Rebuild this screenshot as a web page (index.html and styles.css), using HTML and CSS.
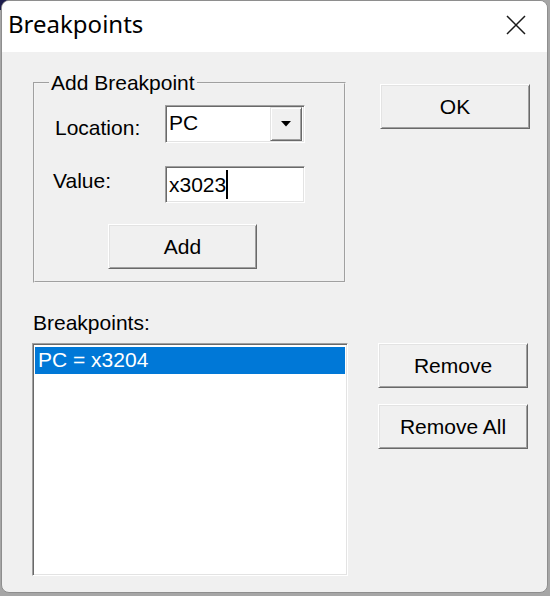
FILE: index.html
```html
<!DOCTYPE html>
<html>
<head>
<meta charset="utf-8">
<link rel="stylesheet" href="styles.css">
</head>
<body>
<div class="window">
  <div class="titlebar">
    <span class="title">Breakpoints</span>
    <svg class="close" width="20" height="20" viewBox="0 0 20 20"><path d="M1 1 L19 19 M19 1 L1 19" stroke="#1a1a1a" stroke-width="1.5" fill="none"/></svg>
  </div>
  <div class="client">
    <div class="col-left">
      <fieldset class="group">
        <legend>Add Breakpoint</legend>
        <div class="field-row row-location">
          <span class="label label-location">Location:</span>
          <div class="combo">
            <span class="combo-text">PC</span>
            <span class="drop-btn"><svg width="10" height="6" viewBox="0 0 10 6"><path d="M0 0 H10 L5 5.5 Z" fill="#000"/></svg></span>
          </div>
        </div>
        <div class="field-row row-value">
          <span class="label label-value">Value:</span>
          <div class="edit"><span class="edit-text">x3023</span><span class="caret"></span></div>
        </div>
        <div class="add-row"><button class="btn btn-add">Add</button></div>
      </fieldset>
      <div class="list-label">Breakpoints:</div>
      <div class="listbox">
        <div class="item selected">PC = x3204</div>
      </div>
    </div>
    <div class="col-right">
      <button class="btn btn-ok">OK</button>
      <button class="btn btn-remove">Remove</button>
      <button class="btn btn-remove-all">Remove All</button>
    </div>
  </div>
</div>
</body>
</html>
```
FILE: styles.css
```css
* { box-sizing: border-box; }
html, body { margin: 0; padding: 0; }
body {
  width: 550px;
  height: 596px;
  overflow: hidden;
  background: linear-gradient(90deg, #1e1e4e 0, #1e1e4e 380px, #a6a6a6 380px) top left / 100% 10px no-repeat, #a6a6a6;
  font-family: "Liberation Sans", Arial, sans-serif;
  font-size: 21px;
  color: #000;
}
.window {
  margin-left: 1px;
  width: 547px;
  height: 593px;
  border: 1px solid #8e8e8e;
  border-radius: 8px;
  overflow: hidden;
  background: #f0f0f0;
  display: flex;
  flex-direction: column;
}
.titlebar {
  height: 51px;
  flex: none;
  background: #fff;
  display: flex;
  align-items: flex-start;
  justify-content: space-between;
  padding: 7px 21px 0 6px;
}
.title {
  font-family: "Noto Sans", "Open Sans", sans-serif;
  font-size: 24px;
  line-height: 32px;
  color: #000;
}
.close { margin-top: 7px; display: block; }
.client {
  flex: 1;
  display: flex;
  padding: 19px 0 0 31px;
}
.col-left {
  width: 314px;
  flex: none;
  display: flex;
  flex-direction: column;
}
.group {
  margin: 0;
  width: 313px;
  height: 212px;
  min-width: 0;
  border: 2px groove #f4f4f4;
  padding: 10px 0 0 20px;
}
.group legend {
  margin-left: -6px;
  padding: 0 2px;
  line-height: 24px;
}
.field-row {
  display: grid;
  grid-template-columns: 110px 140px;
  align-items: start;
}
.row-value { margin-top: 23px; }
.label { line-height: 24px; white-space: nowrap; }
.label-location { margin-top: 11px; }
.label-value { margin-top: 3px; margin-left: -2px; }
.combo, .edit {
  background: #fff;
  border: 1px solid;
  border-color: #a0a0a0 #fff #fff #a0a0a0;
  box-shadow: inset 1px 1px #696969, inset -1px -1px #e3e3e3;
  display: flex;
  align-items: center;
  padding: 2px;
}
.combo { height: 38px; }
.combo-text { flex: 1; padding-left: 1px; line-height: 24px; margin-top: -3px; }
.drop-btn {
  width: 32px;
  height: 34px;
  background: #f0f0f0;
  border: 1px solid;
  border-color: #e3e3e3 #696969 #696969 #e3e3e3;
  box-shadow: inset 1px 1px #fff, inset -1px -1px #a0a0a0;
  display: flex;
  align-items: center;
  justify-content: center;
}
.drop-btn svg { display: block; }
.edit { height: 37px; }
.edit-text { padding-left: 1px; line-height: 24px; }
.caret {
  display: inline-block;
  width: 2px;
  height: 29px;
  background: #000;
  margin-left: 0;
}
.add-row { margin-top: 21px; padding-left: 53px; }
.btn {
  font-family: "Liberation Sans", Arial, sans-serif;
  font-size: 21px;
  color: #000;
  background: #f0f0f0;
  border: 1px solid;
  border-color: #fff #696969 #696969 #fff;
  box-shadow: inset 1px 1px #e3e3e3, inset -1px -1px #a0a0a0;
  padding: 0;
  width: 150px;
  height: 45px;
  display: block;
  line-height: 24px;
}
.btn-add { width: 149px; }
.list-label { margin-top: 28px; line-height: 24px; }
.listbox {
  margin-top: 8px;
  margin-left: -1px;
  width: 316px;
  height: 233px;
  background: #fff;
  border: 1px solid;
  border-color: #a0a0a0 #fff #fff #a0a0a0;
  box-shadow: inset 1px 1px #696969, inset -1px -1px #e3e3e3;
  padding: 3px 2px 2px 2px;
}
.item {
  height: 27px;
  line-height: 26px;
  padding-left: 3px;
  white-space: nowrap;
}
.item.selected { background: #0078d7; color: #fff; }
.col-right {
  margin-left: 31px;
  display: flex;
  flex-direction: column;
}
.btn-ok { margin-top: 13px; margin-left: 2px; }
.btn-remove { margin-top: 214px; }
.btn-remove-all { margin-top: 16px; }
```
